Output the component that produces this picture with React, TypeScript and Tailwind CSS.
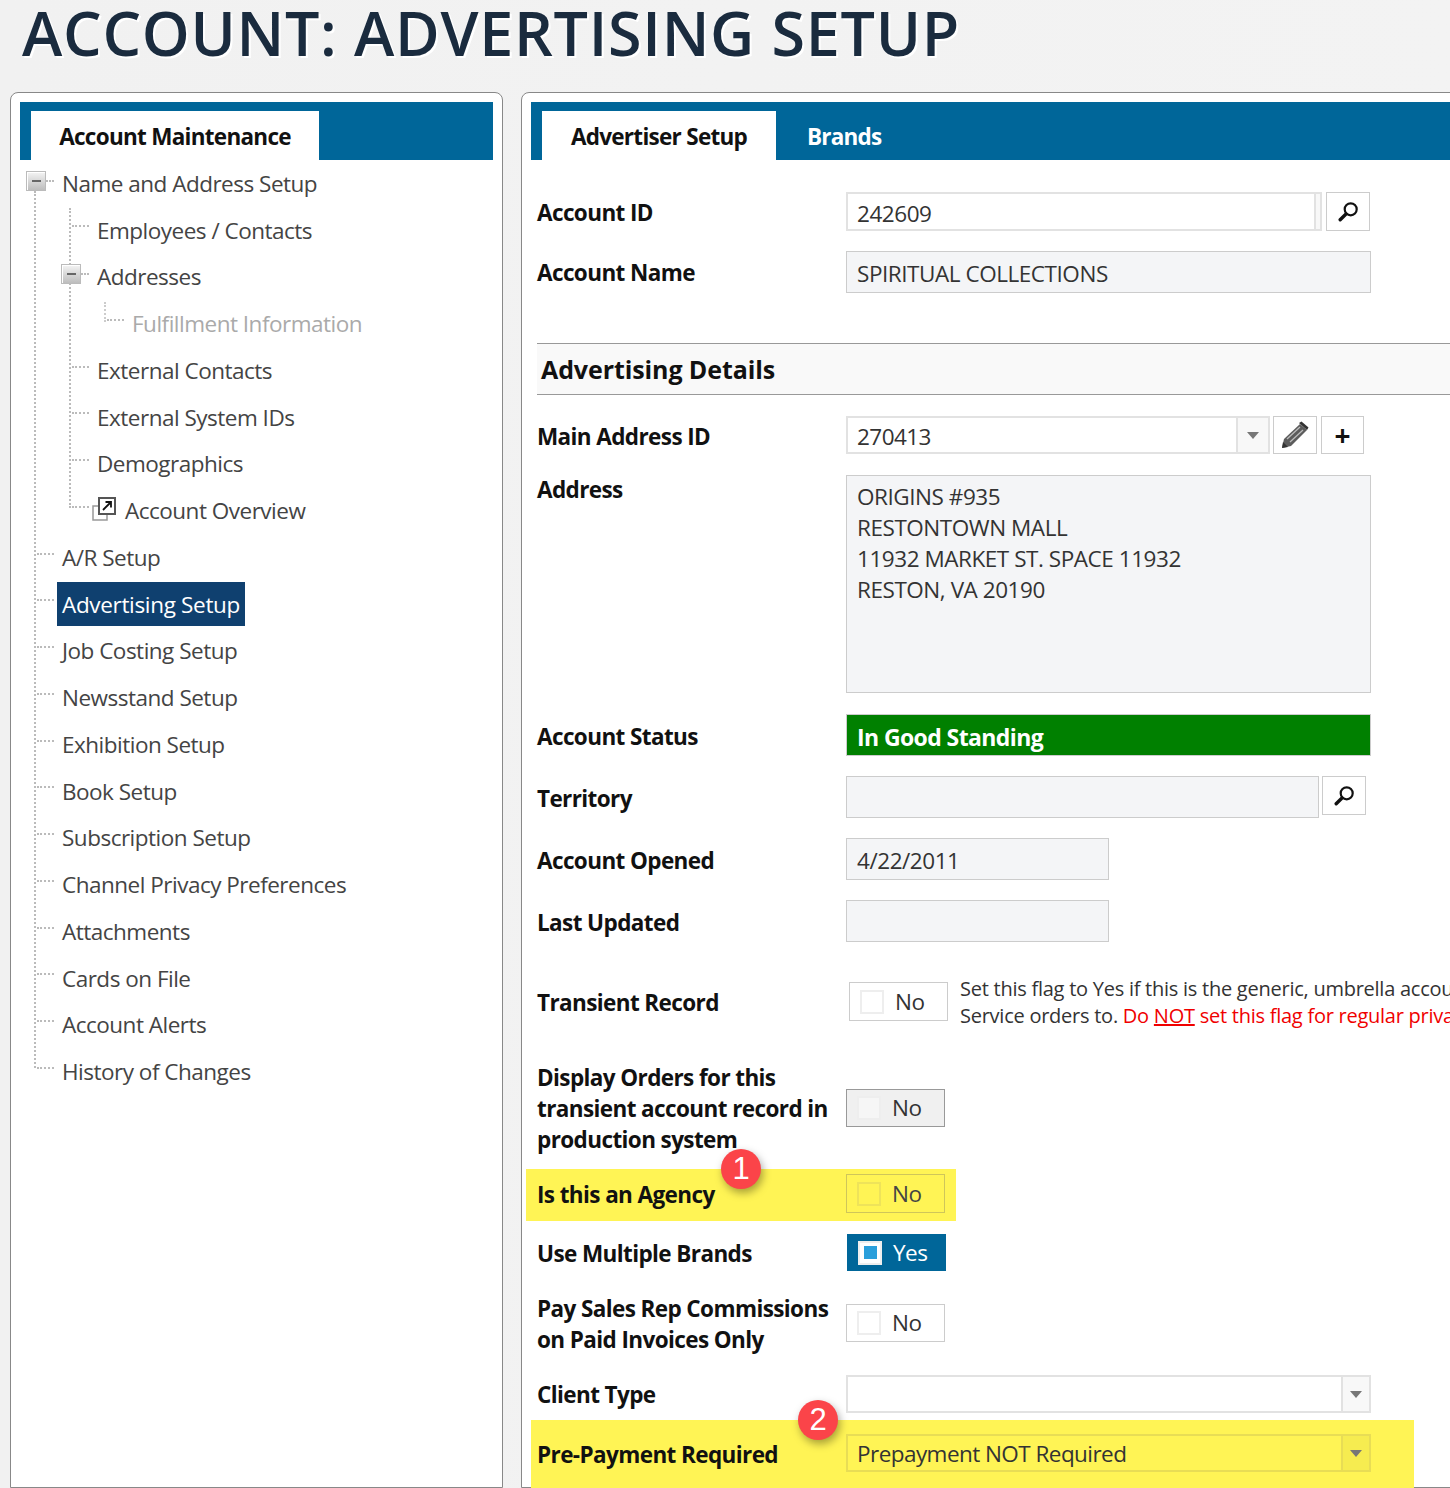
import type { ReactNode } from "react";

const treeItems = [
  { label: "Name and Address Setup", level: 0, box: true },
  { label: "Employees / Contacts", level: 1 },
  { label: "Addresses", level: 1, box: true },
  { label: "Fulfillment Information", level: 2, disabled: true },
  { label: "External Contacts", level: 1 },
  { label: "External System IDs", level: 1 },
  { label: "Demographics", level: 1 },
  { label: "Account Overview", level: 1, link: true },
  { label: "A/R Setup", level: 0 },
  { label: "Advertising Setup", level: 0, selected: true },
  { label: "Job Costing Setup", level: 0 },
  { label: "Newsstand Setup", level: 0 },
  { label: "Exhibition Setup", level: 0 },
  { label: "Book Setup", level: 0 },
  { label: "Subscription Setup", level: 0 },
  { label: "Channel Privacy Preferences", level: 0 },
  { label: "Attachments", level: 0 },
  { label: "Cards on File", level: 0 },
  { label: "Account Alerts", level: 0 },
  { label: "History of Changes", level: 0 },
];

const indent = ["ml-[26px]", "ml-[61px]", "ml-[96px]"];

function SearchIcon() {
  return (
    <svg width="20" height="20" viewBox="0 0 20 20" fill="none">
      <circle cx="12.7" cy="7.3" r="6" stroke="#111" strokeWidth="2.2" />
      <path d="M8 12 L2.2 17.8" stroke="#111" strokeWidth="3.4" strokeLinecap="round" />
    </svg>
  );
}

function PencilIcon() {
  return (
    <svg width="28" height="28" viewBox="0 0 28 28">
      <path d="M1 27 L3 18 L19 3 L26 9 L10 25 Z" fill="#5c5c5c" />
      <path d="M18 2 L20.5 0.5 L27.5 6.5 L26 9 Z" fill="#333" />
      <path d="M6 18 L19 6 M9 21 L22 9" stroke="#bbb" strokeWidth="1.3" />
      <path d="M1 27 L2 21 L7 26 Z" fill="#333" />
    </svg>
  );
}

function LinkIcon() {
  return (
    <svg width="24" height="24" viewBox="0 0 24 24" fill="none" className="mr-[9px] shrink-0 -translate-y-[2px]">
      <rect x="1" y="9" width="14" height="14" fill="#fff" stroke="#999" strokeWidth="1.5" />
      <rect x="7" y="1" width="16" height="16" fill="#fff" stroke="#555" strokeWidth="2" />
      <path d="M11 13 L18.5 5.5 M13.5 5 H19 V10.5" stroke="#111" strokeWidth="1.8" />
    </svg>
  );
}

function Arrow() {
  return (
    <svg width="12" height="7" viewBox="0 0 12 7">
      <path d="M0 0 H12 L6 7 Z" fill="#777" />
    </svg>
  );
}

function ExpandBox() {
  return (
    <span className="flex h-[20px] w-[20px] shrink-0 -translate-y-[3px] items-center justify-center border border-[#bbb] bg-gradient-to-b from-[#f4f4f4] to-[#bdbdbd] shadow-[inset_1px_1px_0_#fff]">
      <span className="h-[2px] w-[9px] bg-[#666]" />
    </span>
  );
}

function IconButton({ children, size = "w-[44px] h-[39px]" }: { children: ReactNode; size?: string }) {
  return <div className={`flex shrink-0 items-center justify-center border border-[#ccc] bg-white ${size}`}>{children}</div>;
}

function Toggle({ value = "No", tone = "plain", margin = "" }: { value?: string; tone?: string; margin?: string }) {
  const shell =
    tone === "on"
      ? "bg-[#006699] border-[#006699] text-white"
      : tone === "off"
        ? "bg-[#f0f0f0] border-[#999] text-[#333]"
        : tone === "yellow"
          ? "bg-transparent border-[#cfc65a] text-[#444]"
          : "bg-white border-[#ccc] text-[#333]";
  const check =
    tone === "yellow"
      ? "border-[#eee35a]"
      : tone === "off"
        ? "border-[#eeeeee] bg-[#f6f6f6]"
        : "border-[#eeeeee] bg-white";
  return (
    <div className={`flex h-[39px] w-[99px] shrink-0 items-center border pl-[10px] text-[22.5px] tracking-[-0.5px] ${shell} ${margin}`}>
      <span className={`flex h-[24px] w-[24px] items-center justify-center border-2 ${check}`}>
        {tone === "on" && <span className="h-[13px] w-[13px] bg-[#2a9fdb]" />}
      </span>
      <span className="ml-[11px]">{value}</span>
    </div>
  );
}

function Row({ label, children, className = "", labelClass = "" }: { label: ReactNode; children?: ReactNode; className?: string; labelClass?: string }) {
  return (
    <div className={`flex items-center ${className}`}>
      <div className={`w-[309px] shrink-0 pt-[1px] text-[22.5px] leading-[31px] font-bold tracking-[-0.6px] text-[#111] ${labelClass}`}>{label}</div>
      {children}
    </div>
  );
}

function Select({ value = "", width, yellow, arrowWidth = "w-[28px]", leading = "leading-[37px]" }: { value?: string; width: string; yellow?: boolean; arrowWidth?: string; leading?: string }) {
  return (
    <div className={`flex h-[38px] items-stretch border-2 text-[22.5px] tracking-[-0.55px] ${yellow ? "border-[#e8dd55]" : "border-[#e2e2e2] bg-white"} ${width}`}>
      <div className={`flex-1 pl-[9px] text-[#333] ${leading}`}>{value}</div>
      <div className={`flex items-center justify-center border-l-2 ${arrowWidth} ${yellow ? "border-[#e8dd55] bg-[#f6ec50]" : "border-[#e2e2e2] bg-[#f8f8f8]"}`}>
        <Arrow />
      </div>
    </div>
  );
}

function ReadOnly({ value = "", width = "w-[525px]", height = "h-[42px]" }: { value?: string; width?: string; height?: string }) {
  return (
    <div className={`border border-[#ccc] bg-[#f4f5f7] pl-[10px] text-[22.5px] leading-[43px] tracking-[-0.45px] text-[#333] ${width} ${height}`}>{value}</div>
  );
}

function Badge({ n, className }: { n: string; className: string }) {
  return (
    <div className={`absolute z-10 flex h-[40px] w-[40px] items-center justify-center rounded-full bg-[#fb4449] pt-[1px] font-['Liberation_Sans',sans-serif] text-[31px] text-white shadow-[2px_4px_8px_rgba(0,0,0,0.35)] ${className}`}>
      {n}
    </div>
  );
}

export default function App() {
  return (
    <div className="h-[1488px] w-[1450px] overflow-hidden bg-gradient-to-r from-[#f1f1f1] to-[#f3f3f3] font-['Open_Sans',sans-serif]">
      <h1 className="h-[92px] pl-[22px] text-[61px] leading-[66px] font-semibold tracking-[0.7px] whitespace-nowrap text-[#1a2b3e] [text-shadow:2px_2px_0_#fff]">
        ACCOUNT: ADVERTISING SETUP
      </h1>

      <div className="flex items-start pl-[10px]">
        {/* Left tree panel */}
        <div className="relative h-[1396px] w-[493px] shrink-0 rounded-t-[8px] border border-[#888] bg-white px-[9px] pt-[9px]">
          <div className="flex h-[58px] items-end bg-[#006699] pl-[11px]">
            <div className="flex h-[49px] w-[288px] items-center justify-center bg-white pt-[3px] text-[22.5px] font-bold tracking-[-0.72px] text-[#111]">
              Account Maintenance
            </div>
          </div>

          <div className="absolute top-[98px] left-[23px] h-[877px] border-l-2 border-dotted border-[#bbb]" />
          <div className="absolute top-[115px] left-[58px] h-[300px] border-l-2 border-dotted border-[#bbb]" />
          <div className="absolute top-[209px] left-[93px] h-[20px] border-l-2 border-dotted border-[#ccc]" />

          <div className="-ml-[9px] pt-[0.25px]">
            {treeItems.map((item) => (
              <div key={item.label} className={`flex h-[46.75px] items-center ${indent[item.level]}`}>
                {item.box ? (
                  <>
                    <span className="-ml-[11px]">
                      <ExpandBox />
                    </span>
                    <span className="mr-[8px] w-[8px] -translate-y-[3px] border-t-2 border-dotted border-[#bbb]" />
                  </>
                ) : (
                  <span className={`w-[17px] -translate-y-[4px] border-t-2 border-dotted border-[#bbb] ${item.selected ? "mr-[3px]" : item.link ? "mr-[3px]" : "mr-[8px]"}`} />
                )}
                {item.link && <LinkIcon />}
                <span
                  className={`text-[22.5px] whitespace-nowrap ${
                    item.selected
                      ? "flex h-[44px] items-center bg-[#0f406f] px-[5px] tracking-[-0.33px] text-white"
                      : item.disabled
                        ? "tracking-[-0.5px] text-[#aaa]"
                        : "tracking-[-0.5px] text-[#444]"
                  }`}
                >
                  {item.label}
                </span>
              </div>
            ))}
          </div>
        </div>

        {/* Right form panel */}
        <div className="relative ml-[18px] h-[1396px] w-[1000px] shrink-0 rounded-t-[8px] border border-[#888] bg-white pt-[9px] pl-[9px]">
          <div className="flex h-[58px] items-end bg-[#006699] pl-[11px]">
            <div className="flex h-[49px] w-[234px] items-center justify-center bg-white pt-[3px] text-[22.5px] font-bold tracking-[-0.72px] text-[#111]">
              Advertiser Setup
            </div>
            <div className="flex h-[49px] items-center pt-[3px] pl-[31px] text-[22.5px] font-bold tracking-[-0.8px] text-white">Brands</div>
          </div>

          <div className="pl-[6px]">
            <Row label="Account ID" className="mt-[32px] h-[39px]">
              <div className="flex h-[39px] w-[476px] border-2 border-[#e2e2e2] bg-white pl-[9px] text-[22.5px] leading-[39px] tracking-[-0.45px] text-[#333]">
                <span className="flex-1">242609</span>
                <span className="w-[6px] border-l-2 border-[#e2e2e2] bg-[#f8f8f8]" />
              </div>
              <div className="ml-[4px]">
                <IconButton>
                  <SearchIcon />
                </IconButton>
              </div>
            </Row>

            <Row label="Account Name" className="mt-[20px] h-[42px]">
              <ReadOnly value="SPIRITUAL COLLECTIONS" />
            </Row>

            <div className="mt-[50px] flex h-[52px] items-center border-y border-[#999] bg-[#f9f9f9] pt-[2px] pl-[4px] text-[25px] font-bold tracking-[-0.1px] text-[#111]">
              Advertising Details
            </div>

            <Row label="Main Address ID" labelClass="translate-y-[1px]" className="mt-[21px] h-[38px]">
              <Select value="270413" width="w-[424px]" arrowWidth="w-[32px]" />
              <div className="ml-[3px]">
                <IconButton size="w-[44px] h-[38px]">
                  <PencilIcon />
                </IconButton>
              </div>
              <div className="ml-[4px]">
                <IconButton size="w-[43px] h-[38px]">
                  <span className="text-[28px] leading-none font-bold text-[#111]">+</span>
                </IconButton>
              </div>
            </Row>

            <Row label={<span className="block -translate-y-[95px]">Address</span>} className="mt-[21px] h-[218px]">
              <div className="h-[218px] w-[525px] border border-[#ccc] bg-[#f4f5f7] pt-[5px] pl-[10px] text-[22.5px] leading-[31px] tracking-[-0.45px] text-[#333]">
                <div>ORIGINS #935</div>
                <div>RESTONTOWN MALL</div>
                <div>11932 MARKET ST. SPACE 11932</div>
                <div>RESTON, VA 20190</div>
              </div>
            </Row>

            <Row label="Account Status" labelClass="translate-y-[1px]" className="mt-[21px] h-[42px]">
              <div className="h-[42px] w-[525px] border border-[#ccc] bg-[#008000] pl-[10px] text-[23px] leading-[44px] font-bold tracking-[-0.6px] text-white">
                In Good Standing
              </div>
            </Row>

            <Row label="Territory" labelClass="translate-y-[1px]" className="mt-[20px] h-[42px]">
              <ReadOnly width="w-[473px]" />
              <div className="mb-[3px] ml-[3px]">
                <IconButton>
                  <SearchIcon />
                </IconButton>
              </div>
            </Row>

            <Row label="Account Opened" labelClass="translate-y-[1px]" className="mt-[20px] h-[42px]">
              <ReadOnly value="4/22/2011" width="w-[263px]" />
            </Row>

            <Row label="Last Updated" labelClass="translate-y-[1px]" className="mt-[20px] h-[42px]">
              <ReadOnly width="w-[263px]" />
            </Row>

            <Row label="Transient Record" className="mt-[40px] h-[39px]">
              <Toggle margin="ml-[3px]" />
              <div className="ml-[12px] text-[20px] leading-[27px] tracking-[-0.25px] whitespace-nowrap text-[#333]">
                <div>Set this flag to Yes if this is the generic, umbrella account that you</div>
                <div>
                  Service orders to. <span className="text-[#f00000]">Do <u>NOT</u> set this flag for regular private accounts</span>
                </div>
              </div>
            </Row>

            <Row label={<>Display Orders for this<br />transient account record in<br />production system</>} labelClass="-translate-y-[1px]" className="mt-[41px] h-[93px]">
              <Toggle tone="off" margin="mb-[2px] !h-[38px]" />
            </Row>

            <div className="relative">
              <Badge n="1" className="top-[-20px] left-[184px]" />
              <Row label={<span className="block -translate-y-[1px]">Is this an Agency</span>} className="mt-[14px] -ml-[11px] h-[52px] w-[430px] bg-[#fff455] pl-[11px]">
                <Toggle tone="yellow" margin="mb-[3px]" />
              </Row>
            </div>

            <Row label="Use Multiple Brands" className="mt-[13px] h-[37px]">
              <Toggle tone="on" value="Yes" margin="ml-[1px] !h-[37px]" />
            </Row>

            <Row label={<>Pay Sales Rep Commissions<br />on Paid Invoices Only</>} labelClass="-translate-y-[1px]" className="mt-[22px] h-[62px]">
              <Toggle margin="mb-[2px] !h-[38px]" />
            </Row>

            <Row label="Client Type" className="mt-[20px] h-[38px]">
              <Select width="w-[525px]" />
            </Row>

            <div className="relative">
              <Badge n="2" className="top-[-20px] left-[261px]" />
              <Row label="Pre-Payment Required" className="mt-[7px] -ml-[6px] h-[68px] w-[883px] bg-[#fff455] pl-[6px]">
                <div className="mb-[2px]">
                  <Select value="Prepayment NOT Required" width="w-[525px]" yellow leading="leading-[36px]" />
                </div>
              </Row>
            </div>
          </div>
        </div>
      </div>
    </div>
  );
}
